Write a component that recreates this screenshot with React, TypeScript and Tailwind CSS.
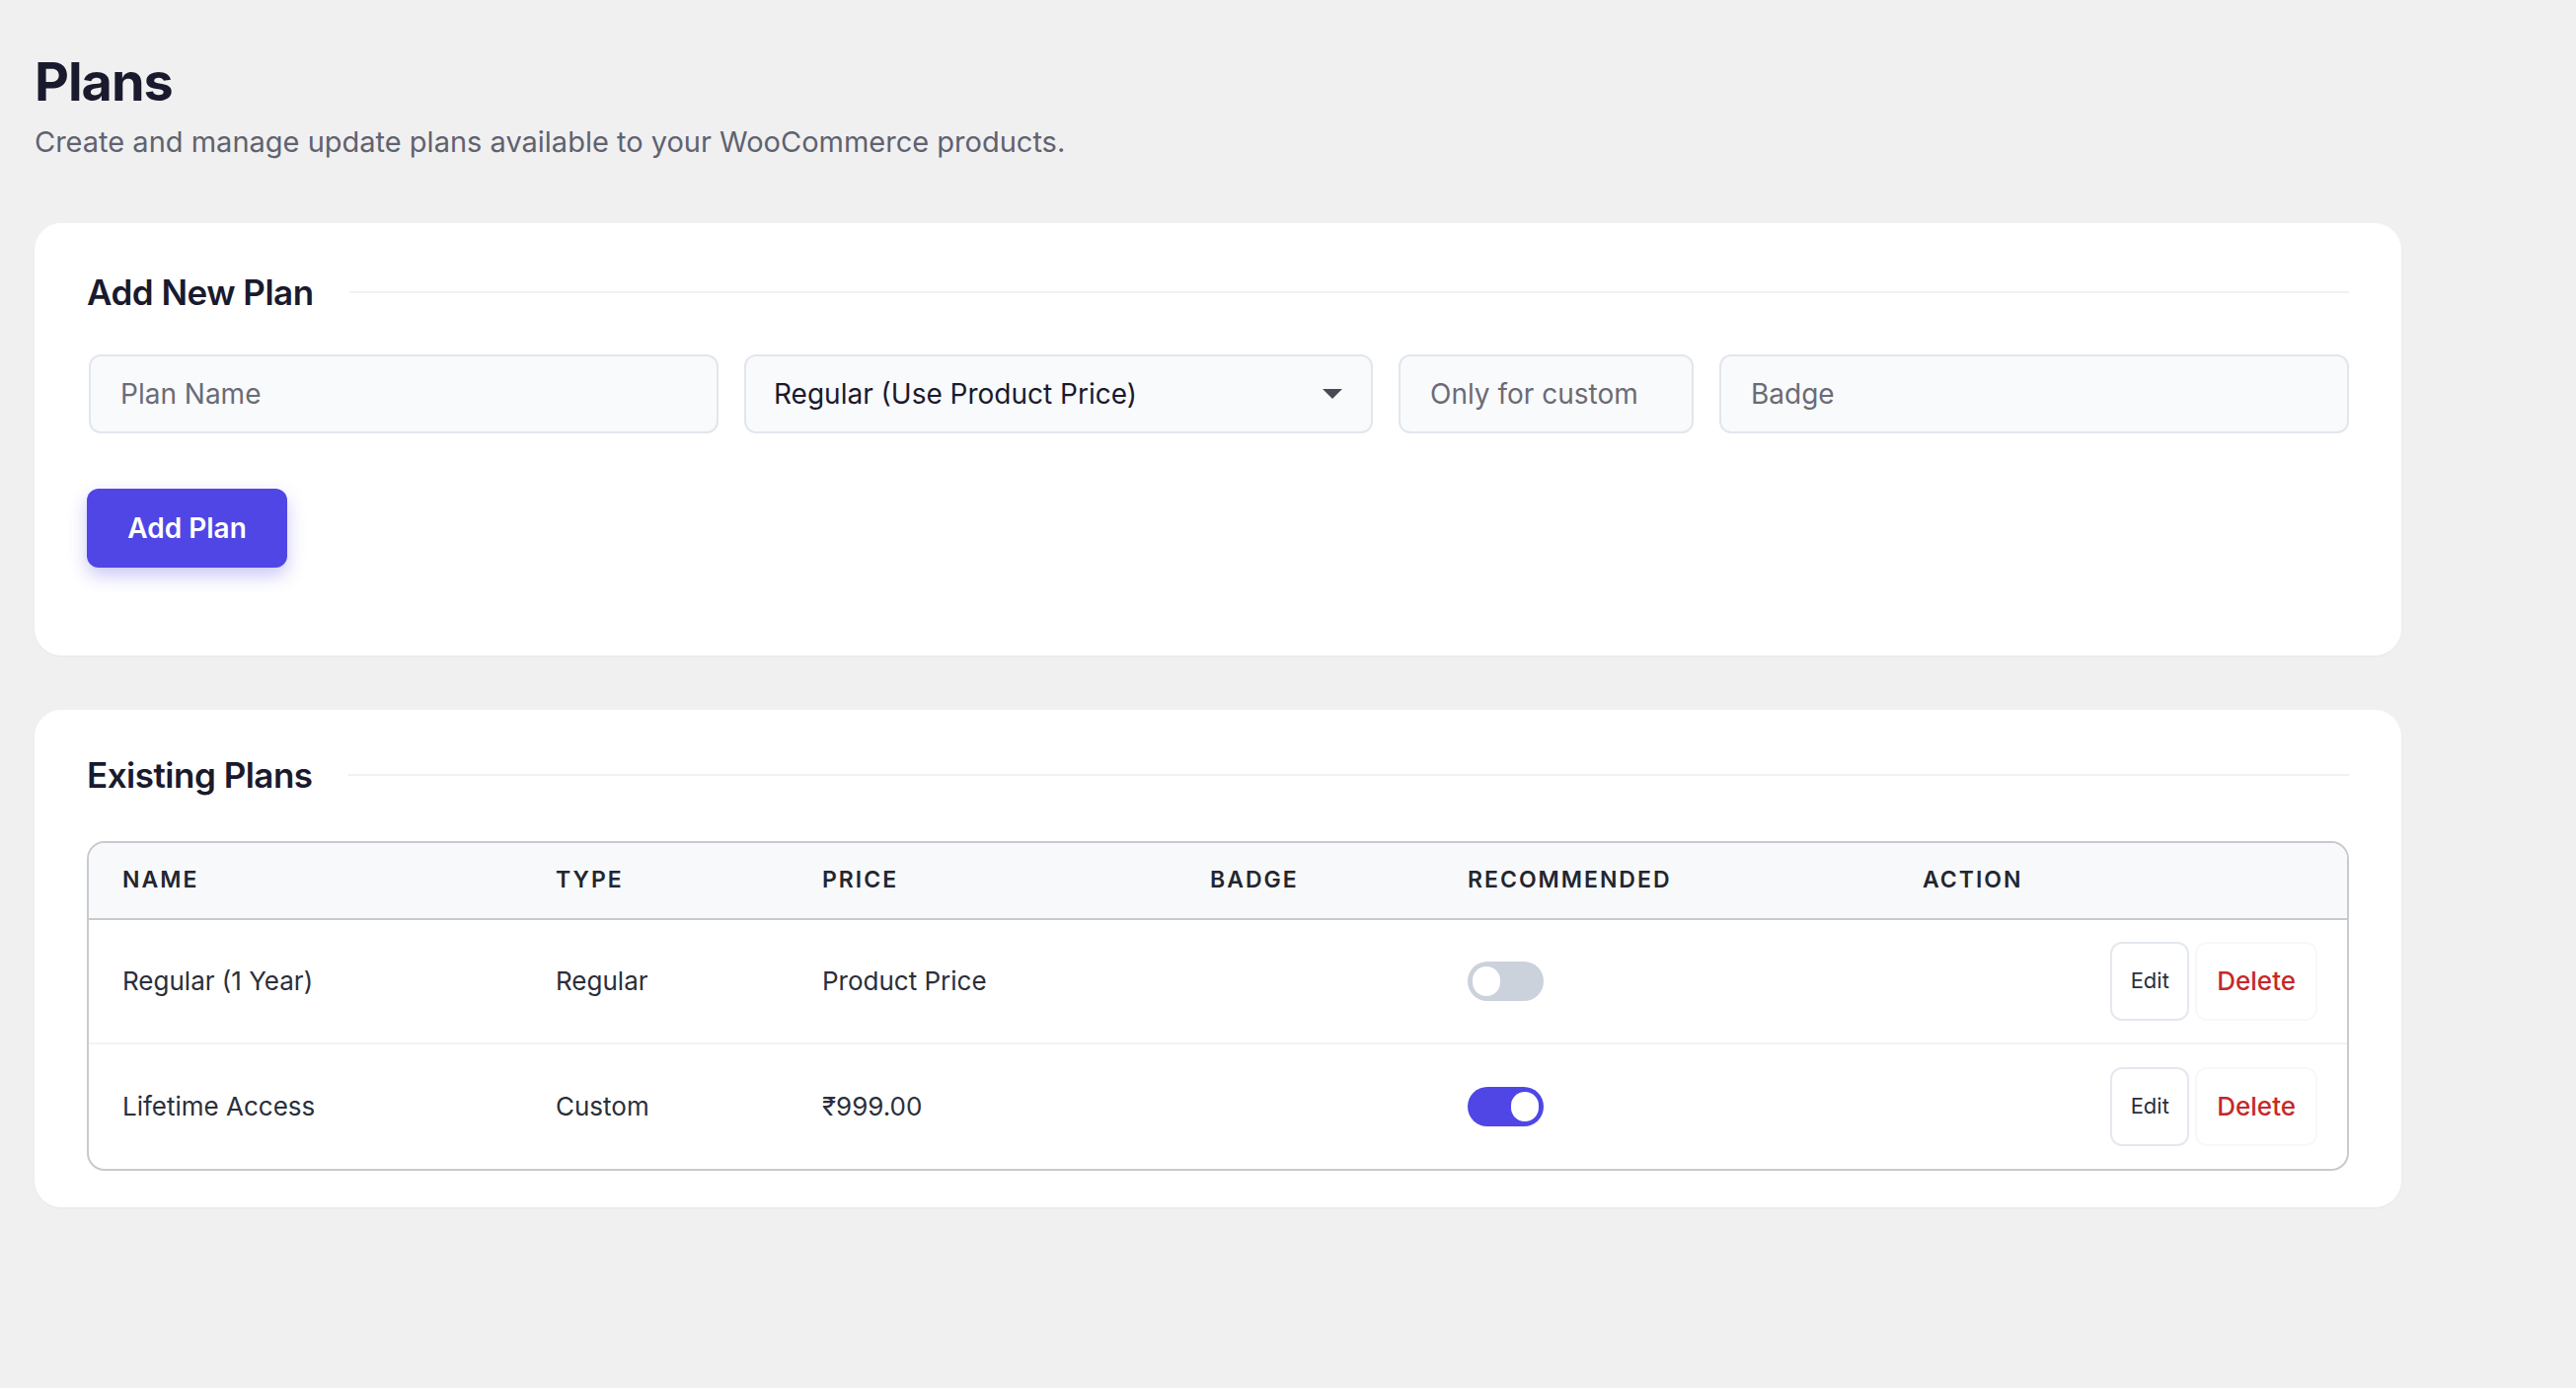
import React from "react";

const cols = "grid-cols-[439px_270px_393px_261px_461px_1fr]";

function Toggle({ on }: { on: boolean }) {
  return (
    <div className={`w-[77px] h-[40px] rounded-full flex items-center px-[5px] ${on ? "bg-[#4f46e5] justify-end" : "bg-[#cbd2dc] justify-start"}`}>
      <div className="w-[28px] h-[30px] rounded-full bg-white" />
    </div>
  );
}

function Row({ name, type, price, on, last }: { name: string; type: string; price: string; on: boolean; last?: boolean }) {
  return (
    <div className={`grid ${cols} h-[126px] items-center text-[26px] text-[#2b2f3a] ${last ? "" : "border-b-2 border-[#f1f3f6]"}`}>
      <div className="pl-[34px]">{name}</div>
      <div className="pl-[34px]">{type}</div>
      <div className="pl-[34px]">{price}</div>
      <div className="pl-[34px]"></div>
      <div className="pl-[34px]"><Toggle on={on} /></div>
      <div className="flex justify-end items-center gap-[6px] pr-[30px]">
        <button className="w-[80px] h-[80px] rounded-[12px] border-2 border-[#e4e8ef] bg-white text-[22px] text-[#2b2f3a]">Edit</button>
        <button className="h-[80px] px-[20px] rounded-[12px] border-2 border-[#f8f8f9] bg-white text-[26px] font-medium text-[#c62828]">Delete</button>
      </div>
    </div>
  );
}

function Heading({ children }: { children: React.ReactNode }) {
  return (
    <div className="flex items-center gap-[36px]">
      <h2 className="text-[35px] font-semibold text-[#1a1a2e] tracking-[-0.5px] whitespace-nowrap">{children}</h2>
      <div className="flex-1 h-[2px] bg-[#f0f1f3]" />
    </div>
  );
}

export default function App() {
  return (
    <div className="min-h-[1406px] bg-[#f0f0f0] px-[35px] pt-[50px]" style={{ fontFamily: "Inter, 'Noto Sans', sans-serif" }}>
      <div className="w-[2398px]">
        <h1 className="text-[54px] font-bold text-[#1a1a2e] tracking-[-1px] leading-[66px]">Plans</h1>
        <p className="mt-[8px] text-[29px] text-[#5f6270] leading-[40px]">Create and manage update plans available to your WooCommerce products.</p>

        <div className="mt-[62px] bg-white rounded-[27px] h-[438px] px-[53px] pt-[44px] shadow-[0_1px_2px_rgba(0,0,0,0.04)]">
          <Heading>Add New Plan</Heading>
          <div className="mt-[36px] grid grid-cols-[638px_637px_299px_638px] gap-[26px] pl-[2px]">
            <div className="h-[80px] rounded-[12px] border-2 border-[#e2e6ee] bg-[#f9fafc] flex items-center px-[30px] text-[28px] text-[#6b6b75]">Plan Name</div>
            <div className="h-[80px] rounded-[12px] border-2 border-[#e2e6ee] bg-[#f9fafc] flex items-center justify-between px-[28px] text-[28px] text-[#1a1a2e]">
              <span>Regular (Use Product Price)</span>
              <svg width="22" height="12" viewBox="0 0 22 12"><path d="M1 1h20L11 11z" fill="#4a4a55" /></svg>
            </div>
            <div className="h-[80px] rounded-[12px] border-2 border-[#e2e6ee] bg-[#f9fafc] flex items-center px-[30px] text-[28px] text-[#6b6b75]">Only for custom</div>
            <div className="h-[80px] rounded-[12px] border-2 border-[#e2e6ee] bg-[#f9fafc] flex items-center px-[30px] text-[28px] text-[#6b6b75]">Badge</div>
          </div>
          <button className="mt-[56px] w-[203px] h-[80px] rounded-[12px] bg-[#4f46e5] text-white text-[28px] font-semibold shadow-[0_8px_18px_rgba(79,70,229,0.3)]">Add Plan</button>
        </div>

        <div className="mt-[55px] bg-white rounded-[27px] h-[504px] px-[53px] pt-[40px] shadow-[0_1px_2px_rgba(0,0,0,0.04)]">
          <Heading>Existing Plans</Heading>
          <div className="mt-[40px] border-2 border-[#c9cace] rounded-[18px] overflow-hidden">
            <div className={`grid ${cols} h-[78px] items-center bg-[#f8f9fb] border-b-2 border-[#c9cace] text-[23px] font-semibold tracking-[2px] text-[#23262f]`}>
              <div className="pl-[34px]">NAME</div>
              <div className="pl-[34px]">TYPE</div>
              <div className="pl-[34px]">PRICE</div>
              <div className="pl-[34px]">BADGE</div>
              <div className="pl-[34px]">RECOMMENDED</div>
              <div className="pl-[34px]">ACTION</div>
            </div>
            <Row name="Regular (1 Year)" type="Regular" price="Product Price" on={false} />
            <Row name="Lifetime Access" type="Custom" price="₹999.00" on={true} last />
          </div>
        </div>
      </div>
    </div>
  );
}
